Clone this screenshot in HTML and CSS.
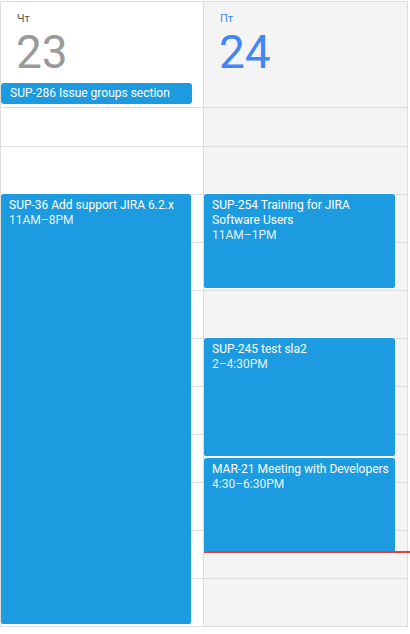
FILE: index.html
```html
<!DOCTYPE html>
<html lang="ru">
<head>
    <meta charset="UTF-8">
    <meta name="viewport" content="width=device-width, initial-scale=1.0">
    <title>Календарь</title>
    <link rel="stylesheet" href="styles.css">
</head>
<body>
    <div class="cal">
        <!-- Шапка с днями -->
        <div class="head">
            <div class="day-head">
                <div class="day-name">Чт</div>
                <div class="day-num">23</div>
                <div class="allday">SUP-286 Issue groups section</div>
            </div>
            <div class="day-head today">
                <div class="day-name">Пт</div>
                <div class="day-num">24</div>
            </div>
        </div>

        <!-- Сетка часов -->
        <div class="body">
            <div class="col">
                <div class="row first"></div>
                <div class="row"></div>
                <div class="row"></div>
                <div class="row"></div>
                <div class="row"></div>
                <div class="row"></div>
                <div class="row"></div>
                <div class="row"></div>
                <div class="row"></div>
                <div class="row"></div>
                <div class="row"></div>

                <div class="event" style="top: 85px; height: 432px;">
                    <div class="ev-title">SUP-36 Add support JIRA 6.2.x</div>
                    <div class="ev-time">11AM–8PM</div>
                </div>
            </div>
            <div class="col today">
                <div class="row first"></div>
                <div class="row"></div>
                <div class="row"></div>
                <div class="row"></div>
                <div class="row"></div>
                <div class="row"></div>
                <div class="row"></div>
                <div class="row"></div>
                <div class="row"></div>
                <div class="row"></div>
                <div class="row"></div>

                <div class="event" style="top: 85px; height: 96px;">
                    <div class="ev-title">SUP-254 Training for JIRA Software Users</div>
                    <div class="ev-time">11AM–1PM</div>
                </div>
                <div class="event" style="top: 229px; height: 120px;">
                    <div class="ev-title">SUP-245 test sla2</div>
                    <div class="ev-time">2–4:30PM</div>
                </div>
                <div class="event" style="top: 349px; height: 96px;">
                    <div class="ev-title">MAR-21 Meeting with Developers</div>
                    <div class="ev-time">4:30–6:30PM</div>
                </div>

                <div class="now-line" style="top: 443px;"></div>
            </div>
        </div>
    </div>
</body>
</html>
```

FILE: styles.css
```css
* {
    box-sizing: border-box;
}
html, body {
    margin: 0;
    height: 100%;
    overflow: hidden;
}
body {
    font-family: Roboto, "Liberation Sans", sans-serif;
    background: #ffffff;
    padding-top: 1px;
}
.cal {
    width: 408px;
    border-top: 1px solid #dddddd;
    border-left: 1px solid #dddddd;
}
.head, .body {
    display: grid;
    grid-template-columns: 203px 204px;
}
.head {
    border-bottom: 1px solid #dddddd;
}
.day-head {
    height: 105px;
    padding-top: 10px;
    border-right: 1px solid #dddddd;
}
.day-name {
    font-size: 11px;
    line-height: 14px;
    color: #555555;
    padding-left: 16px;
}
.day-num {
    font-size: 46px;
    line-height: 46px;
    color: #9a9a9a;
    margin-top: 3px;
    padding-left: 15px;
}
.today {
    background: #f4f4f4;
}
.today .day-name,
.today .day-num {
    color: #4285f4;
}
.allday {
    margin: 8px 11px 0 0;
    padding: 3px 9px;
    font-size: 12px;
    line-height: 15px;
    color: #ffffff;
    background: #1c9be1;
    border-radius: 3px;
    white-space: nowrap;
    overflow: hidden;
}
.col {
    position: relative;
    border-right: 1px solid #dddddd;
}
.row {
    height: 48px;
    border-bottom: 1px solid #dddddd;
}
.row.first {
    height: 39px;
}
.event {
    position: absolute;
    left: 0;
    right: 12px;
    padding: 4px 2px 4px 8px;
    background: #1c9be1;
    border-top: 1px solid #ffffff;
    border-bottom: 1px solid #ffffff;
    border-radius: 3px;
    color: #ffffff;
    font-size: 12px;
    line-height: 15px;
    overflow: hidden;
}
.ev-time {
    color: rgba(255, 255, 255, 0.9);
}
.now-line {
    position: absolute;
    left: 0;
    right: -3px;
    height: 2px;
    background: #db4437;
}
```
